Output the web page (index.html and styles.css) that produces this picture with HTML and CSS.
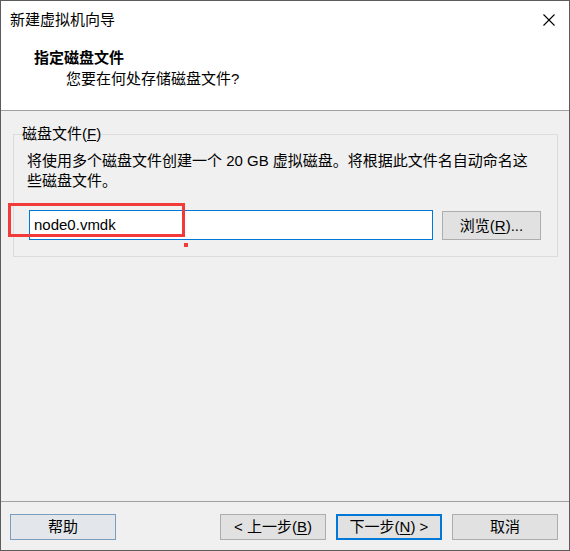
FILE: index.html
```html
<!DOCTYPE html>
<html lang="zh-CN">
<head>
<meta charset="utf-8">
<title>新建虚拟机向导</title>
<link rel="stylesheet" href="styles.css">
</head>
<body>
<div class="window">
  <div class="header">
    <div class="titlebar">
      <span class="title">新建虚拟机向导</span>
      <svg class="close" width="12" height="12" viewBox="0 0 12 12"><path d="M0.5 0.5 L11.5 11.5 M11.5 0.5 L0.5 11.5" stroke="#000" stroke-width="1.1" fill="none"/></svg>
    </div>
    <div class="heading">指定磁盘文件</div>
    <div class="subheading">您要在何处存储磁盘文件?</div>
  </div>
  <div class="content">
    <fieldset class="group">
      <legend class="legend">磁盘文件(<u>F</u>)</legend>
      <div class="desc">将使用多个磁盘文件创建一个 20 GB 虚拟磁盘。将根据此文件名自动命名这<br>些磁盘文件。</div>
      <div class="row">
        <div class="input">node0.vmdk</div>
        <div class="btn browse">浏览(<u>R</u>)...</div>
      </div>
    </fieldset>
  </div>
  <div class="footer">
    <div class="btn help">帮助</div>
    <div class="nav">
      <div class="btn">&lt; 上一步(<u>B</u>)</div>
      <div class="btn primary">下一步(<u>N</u>) &gt;</div>
      <div class="btn">取消</div>
    </div>
  </div>
  <div class="mark"></div>
  <div class="dot"></div>
</div>
</body>
</html>
```
FILE: styles.css
```css
* { box-sizing: border-box; }
html, body { margin: 0; padding: 0; background: #fff; }
body {
  font-family: "Liberation Sans", "Noto Sans CJK SC", sans-serif;
  font-size: 15px;
  line-height: 20px;
  color: #000;
}
.window {
  position: relative;
  width: 570px;
  height: 551px;
  border: 1px solid #5c5c5c;
  background: #f0f0f0;
  display: flex;
  flex-direction: column;
}
.header {
  height: 110px;
  background: #fff;
  border-bottom: 1px solid #a0a0a0;
  flex: none;
}
.titlebar {
  display: flex;
  justify-content: space-between;
  align-items: center;
  height: 38px;
  padding: 0 14px 1px 9px;
}
.close { display: block; }
.heading {
  font-weight: bold;
  padding-left: 33px;
  margin-top: 9px;
}
.subheading {
  padding-left: 65px;
  margin-top: 1px;
}
.content {
  flex: 1;
  padding: 13px 11px 0 12px;
}
.group {
  margin: 0;
  padding: 0 0 16px 0;
  border: 1px solid #dcdcdc;
  height: 133px;
}
.legend {
  margin-left: 8px;
  padding: 0;
}
.desc {
  margin-top: 7px;
  padding-left: 13px;
  white-space: nowrap;
}
.row {
  display: flex;
  align-items: flex-start;
  margin-top: 19px;
  padding-left: 15px;
}
.input {
  width: 404px;
  height: 30px;
  border: 1px solid #0078d7;
  background: #fff;
  padding: 4px 4px 0 4px;
  line-height: 20px;
}
.btn {
  height: 26px;
  width: 106px;
  border: 1px solid #adadad;
  background: #e1e1e1;
  display: flex;
  align-items: center;
  justify-content: center;
  white-space: nowrap;
}
.btn u { text-underline-offset: 2px; }
.browse {
  margin-left: 9px;
  margin-top: 1px;
  width: 99px;
  height: 29px;
}
.footer {
  flex: none;
  height: 49px;
  border-top: 1px solid #a0a0a0;
  display: flex;
  justify-content: space-between;
  align-items: flex-start;
  padding: 12px 11px 0 9px;
}
.help {
  background: #e3e7eb;
  border-color: #7a9dc0;
}
.nav {
  display: flex;
  gap: 10px;
}
.primary {
  border: 2px solid #0078d7;
}
.mark {
  position: absolute;
  left: 7px;
  top: 202px;
  width: 177px;
  height: 34px;
  border: 3px solid #f23a3a;
}
.dot {
  position: absolute;
  left: 183px;
  top: 242px;
  width: 4px;
  height: 4px;
  background: #f23a3a;
}
```
